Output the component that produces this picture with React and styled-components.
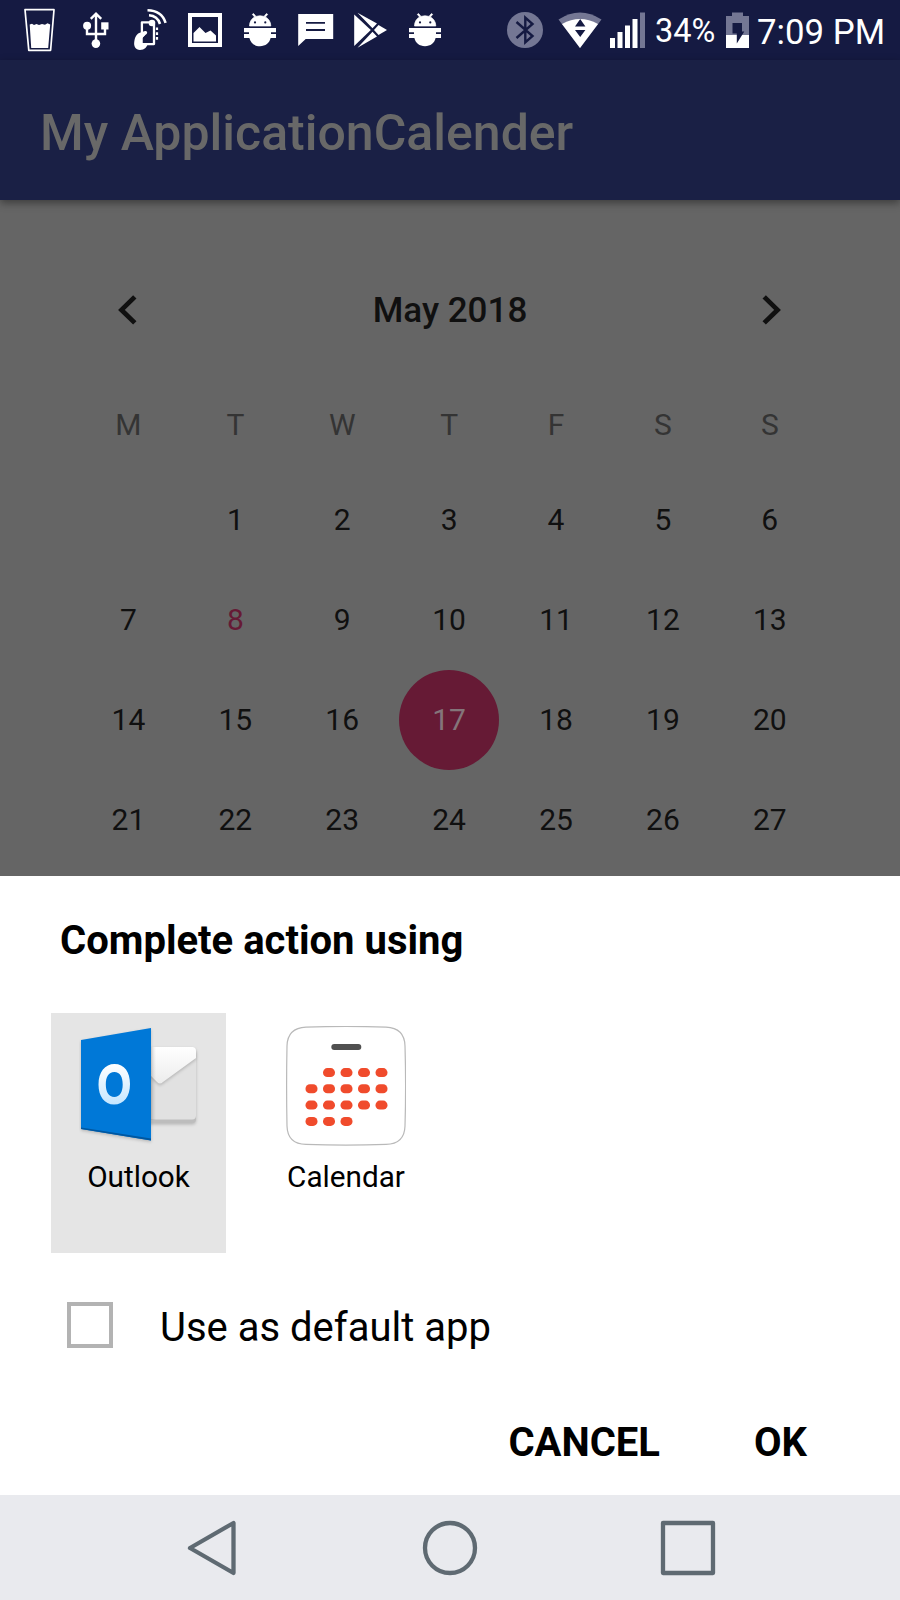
import React from "react";
import styled, { createGlobalStyle } from "styled-components";

const GlobalStyle = createGlobalStyle`
  * { box-sizing: border-box; }
  body { margin: 0; background: #666; }
`;

const Screen = styled.div`
  width: 900px;
  height: 1600px;
  display: flex;
  flex-direction: column;
  overflow: hidden;
  background: #656565;
  font-family: Roboto, "Liberation Sans", sans-serif;
  color: #000;
`;

const StatusBar = styled.header`
  height: 60px;
  flex: none;
  display: flex;
  background: #151a42;
  color: #fff;
`;

const StatusIcon = styled.svg`
  flex: none;
  width: ${(p) => p.$w}px;
  height: 60px;
  margin-left: ${(p) => p.$gap}px;
`;

const StatusText = styled.span`
  flex: none;
  width: ${(p) => p.$w}px;
  margin-left: ${(p) => p.$gap}px;
  font-size: ${(p) => p.$size}px;
  line-height: ${(p) => p.$line}px;
  white-space: nowrap;
`;

const AppBar = styled.div`
  height: 140px;
  flex: none;
  padding: 5px 0 0 40px;
  background: #1a2045;
  box-shadow: 0 3px 8px rgba(0, 0, 0, 0.4);
  z-index: 1;
`;

const AppTitle = styled.h1`
  margin: 0;
  font-size: 50px;
  font-weight: 500;
  line-height: 136px;
  color: #686868;
  white-space: nowrap;
`;

const CalendarPane = styled.main`
  height: 675.5px;
  flex: none;
  padding: 60px 76px 0 75px;
  overflow: hidden;
`;

const MonthRow = styled.div`
  height: 100px;
  display: flex;
  align-items: center;
  justify-content: space-between;
`;

const MonthName = styled.h2`
  margin: 0;
  padding: 2px 0 0 1px;
  font-size: 35px;
  font-weight: 500;
  line-height: 100px;
  color: #101010;
`;

const Chevron = styled.svg`
  width: 107px;
  height: 60px;
  fill: none;
  stroke: #101010;
  stroke-width: 4.8;
`;

const Week = styled.div`
  display: grid;
  grid-template-columns: repeat(7, 106.9px);
  justify-items: center;
  height: ${(p) => p.$h || 100}px;
  padding-top: ${(p) => p.$top || 0}px;
`;

const WeekdayLabel = styled.span`
  font-size: 30px;
  line-height: 49px;
  color: #343434;
`;

const Day = styled.span`
  width: 100px;
  height: 100px;
  border-radius: 50%;
  text-align: center;
  font-size: 30px;
  line-height: 100px;
  color: ${(p) => (p.$selected ? "#84757a" : p.$today ? "#661a35" : "#101010")};
  background: ${(p) => (p.$selected ? "#661a35" : "transparent")};
`;

const Sheet = styled.section`
  height: 619.5px;
  flex: none;
  display: flex;
  flex-direction: column;
  background: #fff;
`;

const SheetTitle = styled.h2`
  margin: 35.5px 0 0 60px;
  font-size: 40px;
  font-weight: 700;
  line-height: 60px;
`;

const AppGrid = styled.div`
  display: flex;
  gap: 32.5px;
  margin: 42px 0 0 51px;
`;

const AppTile = styled.div`
  width: 175px;
  height: 239.5px;
  padding-top: 13px;
  display: flex;
  flex-direction: column;
  align-items: center;
  background: ${(p) => (p.$selected ? "#e5e5e5" : "transparent")};
`;

const AppIcon = styled.svg`
  width: 120px;
  height: 120px;
`;

const AppLabel = styled.span`
  margin-top: 11px;
  font-size: 29.7px;
  line-height: 40px;
`;

const DefaultRow = styled.label`
  display: flex;
  align-items: center;
  height: 60px;
  margin: 43.5px 0 0 67px;
`;

const Checkbox = styled.span`
  width: 46px;
  height: 46px;
  border: 4px solid #b3b3b3;
  margin-bottom: 2px;
`;

const DefaultLabel = styled.span`
  margin-left: 47px;
  padding-top: 4px;
  font-size: 40px;
  line-height: 60px;
`;

const Actions = styled.div`
  display: flex;
  justify-content: flex-end;
  gap: 94px;
  margin-top: 57px;
  padding-right: 93px;
`;

const ActionButton = styled.button`
  border: 0;
  padding: 0;
  background: none;
  font: 700 40px/60px Roboto, "Liberation Sans", sans-serif;
  color: #000;
`;

const NavBar = styled.nav`
  height: 105px;
  flex: none;
  display: flex;
  align-items: center;
  justify-content: space-between;
  padding: 0 184px 0 184px;
  background: #e9eaee;
`;

const NavIcon = styled.svg`
  width: 60px;
  height: 60px;
  fill: none;
  stroke: #5f6a72;
  stroke-width: 4.3;
  stroke-linejoin: round;
`;

const BugIcon = ({ gap }) => (
  <StatusIcon $w={32} $gap={gap} viewBox="244 0 32 60" fill="#fff">
    <path d="M249.5 26C249.5 21.8 251.6 18.6 254.6 17L252.3 14.4L253.6 13.6L256 16.4Q260 15.2 264 16.4L266.4 13.6L267.7 14.4L265.4 17C268.5 18.6 270.8 21.8 270.8 26Z" stroke="#fff" strokeWidth=".7" />
    <circle cx="255" cy="22.4" r="1.1" fill="#151a42" />
    <circle cx="265.3" cy="22.4" r="1.1" fill="#151a42" />
    <path d="M244 28H276V32.2H271V34H276V38H270.6C269.5 43 265.5 46.2 260 46.2S250.5 43 249.4 38H244V34H249V32.2H244Z" />
  </StatusIcon>
);

const weekdays = ["M", "T", "W", "T", "F", "S", "S"];
const weeks = [
  [null, 1, 2, 3, 4, 5, 6],
  [7, 8, 9, 10, 11, 12, 13],
  [14, 15, 16, 17, 18, 19, 20],
  [21, 22, 23, 24, 25, 26, 27],
];

const dotRows = [
  [46.6, [1, 2, 3, 4]],
  [62.8, [0, 1, 2, 3, 4]],
  [79.1, [0, 1, 2, 3, 4]],
  [95.4, [0, 1, 2]],
];

export default function App() {
  return (
    <Screen>
      <GlobalStyle />
      <StatusBar>
        <StatusIcon $w={32} $gap={24} viewBox="24 0 32 60">
          <path d="M25 9.7H54L50.6 50.3H28.8Z" fill="none" stroke="#fff" strokeWidth="1.7" strokeLinejoin="round" />
          <path d="M29.7 24.5L32 23.8L34 25L36.5 24L39 25L42 24L45 24.8L47.5 23.2L50.2 24.5L48.2 48H31.2Z" fill="#fff" />
        </StatusIcon>
        <StatusIcon $w={26} $gap={26.5} viewBox="82.5 0 26 60" fill="none" stroke="#fff" strokeWidth="2.4">
          <path d="M95.500 14V43M90.300 18.800L95.500 13.600L100.700 18.800M86.500 27V34H104.500V27" />
          <circle cx="86.6" cy="25.8" r="4" fill="#fff" stroke="none" />
          <path d="M100.7 22.3H108V29.5H100.7Z" fill="#fff" stroke="none" />
          <circle cx="95.4" cy="43.6" r="4.3" fill="#fff" stroke="none" />
        </StatusIcon>
        <StatusIcon $w={34} $gap={24.5} viewBox="133 0 34 60" fill="none" stroke="#fff">
          <path d="M149 22.3H141.9V44H154V24" strokeWidth="2.3" strokeLinejoin="round" />
          <path d="M145 31C146.8 30.600 147.800 32.300 146.800 33.800L142.600 38V42.500H148C147.500 47 144.500 50 140 50C135.500 50 133.500 46 134.300 41.500C135 36.500 137 33.600 140.500 32.600Z" fill="#fff" stroke="none" />
          <path d="M146.500 35L143.300 38.300V42.500H152.500" stroke="#151a42" strokeWidth="1.1" />
          <circle cx="152" cy="23" r="3.3" fill="#fff" stroke="none" />
          <path d="M149 15.300Q157.500 15.800 160 24M147.500 10.300Q161.500 10.500 165.600 22.800" strokeWidth="2.6" />
          <path d="M157 27.500V40" strokeDasharray="2.6 2.200" strokeWidth="2.2" />
        </StatusIcon>
        <StatusIcon $w={34} $gap={21} viewBox="188 0 34 60">
          <path d="M188 13H222V47H188ZM192 17V43H218V17Z" fill="#fff" fillRule="evenodd" />
          <path d="M193.5 41.500V33L199.500 27L205.500 33L210.500 30.500L216 35.500V41.500Z" fill="#fff" />
        </StatusIcon>
        <BugIcon gap={22} />
        <StatusIcon $w={36} $gap={21.5} viewBox="297.5 0 36 60">
          <path d="M297.7 14H332.700V39H305.200L297.700 46Z" fill="#fff" />
          <path d="M305.5 22.800H324.500M305.500 30H324.500" stroke="#151a42" strokeWidth="1.8" />
        </StatusIcon>
        <StatusIcon $w={34} $gap={20.5} viewBox="354 0 34 60" fill="#fff">
          <path d="M354.2 14.500L370.800 30L354.200 46Z" />
          <path d="M357.5 12.800L377 23.600L372.500 28.300ZM357.500 47.700L377 36.400L372.500 31.800Z" />
          <path d="M378.500 25L387 29.900L378.500 35L374 30Z" />
        </StatusIcon>
        <BugIcon gap={21} />

        <StatusIcon $w={36} $gap={66} viewBox="507 0 36 60">
          <circle cx="525" cy="30" r="18" fill="#747794" />
          <path d="M516.5 22L532.500 36L525.300 42.300V17.700L532.500 24L516.500 38" fill="none" stroke="#151a42" strokeWidth="2.4" />
        </StatusIcon>
        <StatusIcon $w={44} $gap={15} viewBox="558 0 44 60">
          <path d="M558.5 19.500Q580 5.500 601.500 19.500L580 48Z" fill="#747794" />
          <path d="M562 24Q580 14 598 24L580 48Z" fill="#fff" />
          <path d="M575 26.500L580.200 19L585.400 26.500ZM575 30L580.200 37L585.400 30Z" fill="#151a42" />
        </StatusIcon>
        <StatusIcon $w={35} $gap={8} viewBox="610 0 35 60" fill="#fff">
          <path d="M610 38H615V48H610ZM617.500 32H622.500V48H617.500ZM625 25.500H630V48H625ZM632.500 19H637.500V48H632.500Z" />
          <path d="M640 12.500H645V48H640Z" fill="#747794" />
        </StatusIcon>
        <StatusText $w={60} $gap={10} $size={32.5} $line={63.5}>34%</StatusText>
        <StatusIcon $w={23} $gap={11} viewBox="726 0 23 60">
          <path d="M732 12.500H743V16H749V35H726V16H732Z" fill="#747794" />
          <path d="M726 35H749V48H726Z" fill="#fff" />
          <path d="M732.5 23H742V31.500H744.300L736.800 43.500V33.500H732.500Z" fill="#151a42" />
        </StatusIcon>
        <StatusText $w={128} $gap={8} $size={34.8} $line={64}>7:09 PM</StatusText>
      </StatusBar>

      <AppBar>
        <AppTitle>My ApplicationCalender</AppTitle>
      </AppBar>

      <CalendarPane>
        <MonthRow>
          <Chevron viewBox="0 0 107 60"><path d="M59.8 16.900L46.500 29.900L59.800 42.900" /></Chevron>
          <MonthName>May 2018</MonthName>
          <Chevron viewBox="0 0 107 60"><path d="M47.2 16.900L60.500 29.900L47.200 42.900" /></Chevron>
        </MonthRow>
        <Week $h={110} $top={40}>
          {weekdays.map((d, i) => <WeekdayLabel key={i}>{d}</WeekdayLabel>)}
        </Week>
        {weeks.map((week, i) => (
          <Week key={i}>
            {week.map((d, j) => (
              <Day key={j} $selected={d === 17} $today={d === 8}>{d}</Day>
            ))}
          </Week>
        ))}
      </CalendarPane>

      <Sheet>
        <SheetTitle>Complete action using</SheetTitle>
        <AppGrid>
          <AppTile $selected>
            <AppIcon viewBox="0 0 120 120">
              <defs>
                <linearGradient id="o" x1="0" y1="0" x2="0" y2="1">
                  <stop offset="0" stopColor="#fff" />
                  <stop offset="1" stopColor="#c5e6ff" />
                </linearGradient>
                <linearGradient id="flap" x1="0" y1="0" x2="0" y2="1">
                  <stop offset="0" stopColor="#fff" />
                  <stop offset="1" stopColor="#ececec" />
                </linearGradient>
                <linearGradient id="fold" x1="0" y1="0" x2="1" y2="0">
                  <stop offset="0" stopColor="#000" stopOpacity=".16" />
                  <stop offset="1" stopColor="#000" stopOpacity="0" />
                </linearGradient>
                <filter id="soft" x="-20%" y="-20%" width="140%" height="150%" colorInterpolationFilters="sRGB">
                  <feDropShadow dx="0" dy="1.5" stdDeviation="1.5" floodOpacity=".2" />
                </filter>
              </defs>
              <rect x="60" y="23" width="57" height="74" rx="4" fill="#bdbdbd" filter="url(#soft)" />
              <rect x="60" y="21" width="57" height="72.500" rx="4" fill="#e1e1e1" />
              <path d="M60 21H113Q117 21 117 25V32L84 56Q81 59 78 56L60 38Z" fill="url(#flap)" filter="url(#soft)" />
              <path d="M71.500 21H77V94H71.500Z" fill="url(#fold)" />
              <path d="M2 14L72 2V114.500L2 103Z" fill="#0078d7" filter="url(#soft)" />
              <path d="M2 101.500L72 112.500V114.500L2 103Z" fill="#0057a0" />
              <path fillRule="evenodd" d="M35.5 38C45.5 38 51 46 51 58C51 70.5 45 78.5 35 78.5C25.5 78.5 19.5 70.5 19.5 58.5C19.5 46 26 38 35.5 38ZM35.3 46C29.5 46 26.8 51 26.8 58.3C26.8 66 29.8 71 35.3 71C40.8 71 43.7 66 43.7 58.5C43.7 51 41.2 46 35.3 46Z" fill="url(#o)" />
            </AppIcon>
            <AppLabel>Outlook</AppLabel>
          </AppTile>
          <AppTile>
            <AppIcon viewBox="0 0 120 120">
              <path d="M20 1.2Q60 -.4 100 1.2Q118.500 2 119 20Q120.200 60 119 100Q118.500 118 100 118.400Q60 120 20 118.400Q1.500 118 1 100Q.2 60 1 20Q1.500 2 20 1.200Z" fill="#fff" stroke="#b9b9b9" strokeWidth="1.2" />
              <rect x="45.3" y="18" width="30" height="6" rx="3" fill="#505050" />
              {dotRows.map(([y, cols]) =>
                cols.map((c) => (
                  <rect key={`${y}-${c}`} x={19.5 + c * 17.5} y={y - 4.5} width="12" height="9" rx="4.400" fill="#f04b2c" />
                ))
              )}
            </AppIcon>
            <AppLabel>Calendar</AppLabel>
          </AppTile>
        </AppGrid>
        <DefaultRow>
          <Checkbox />
          <DefaultLabel>Use as default app</DefaultLabel>
        </DefaultRow>
        <Actions>
          <ActionButton>CANCEL</ActionButton>
          <ActionButton>OK</ActionButton>
        </Actions>
      </Sheet>

      <NavBar>
        <NavIcon viewBox="0 0 60 60"><path d="M6 30L49.500 5V55Z" /></NavIcon>
        <NavIcon viewBox="0 0 60 60"><circle cx="30" cy="30" r="25" /></NavIcon>
        <NavIcon viewBox="0 0 60 60"><path d="M7 5H57V55H7Z" /></NavIcon>
      </NavBar>
    </Screen>
  );
}
